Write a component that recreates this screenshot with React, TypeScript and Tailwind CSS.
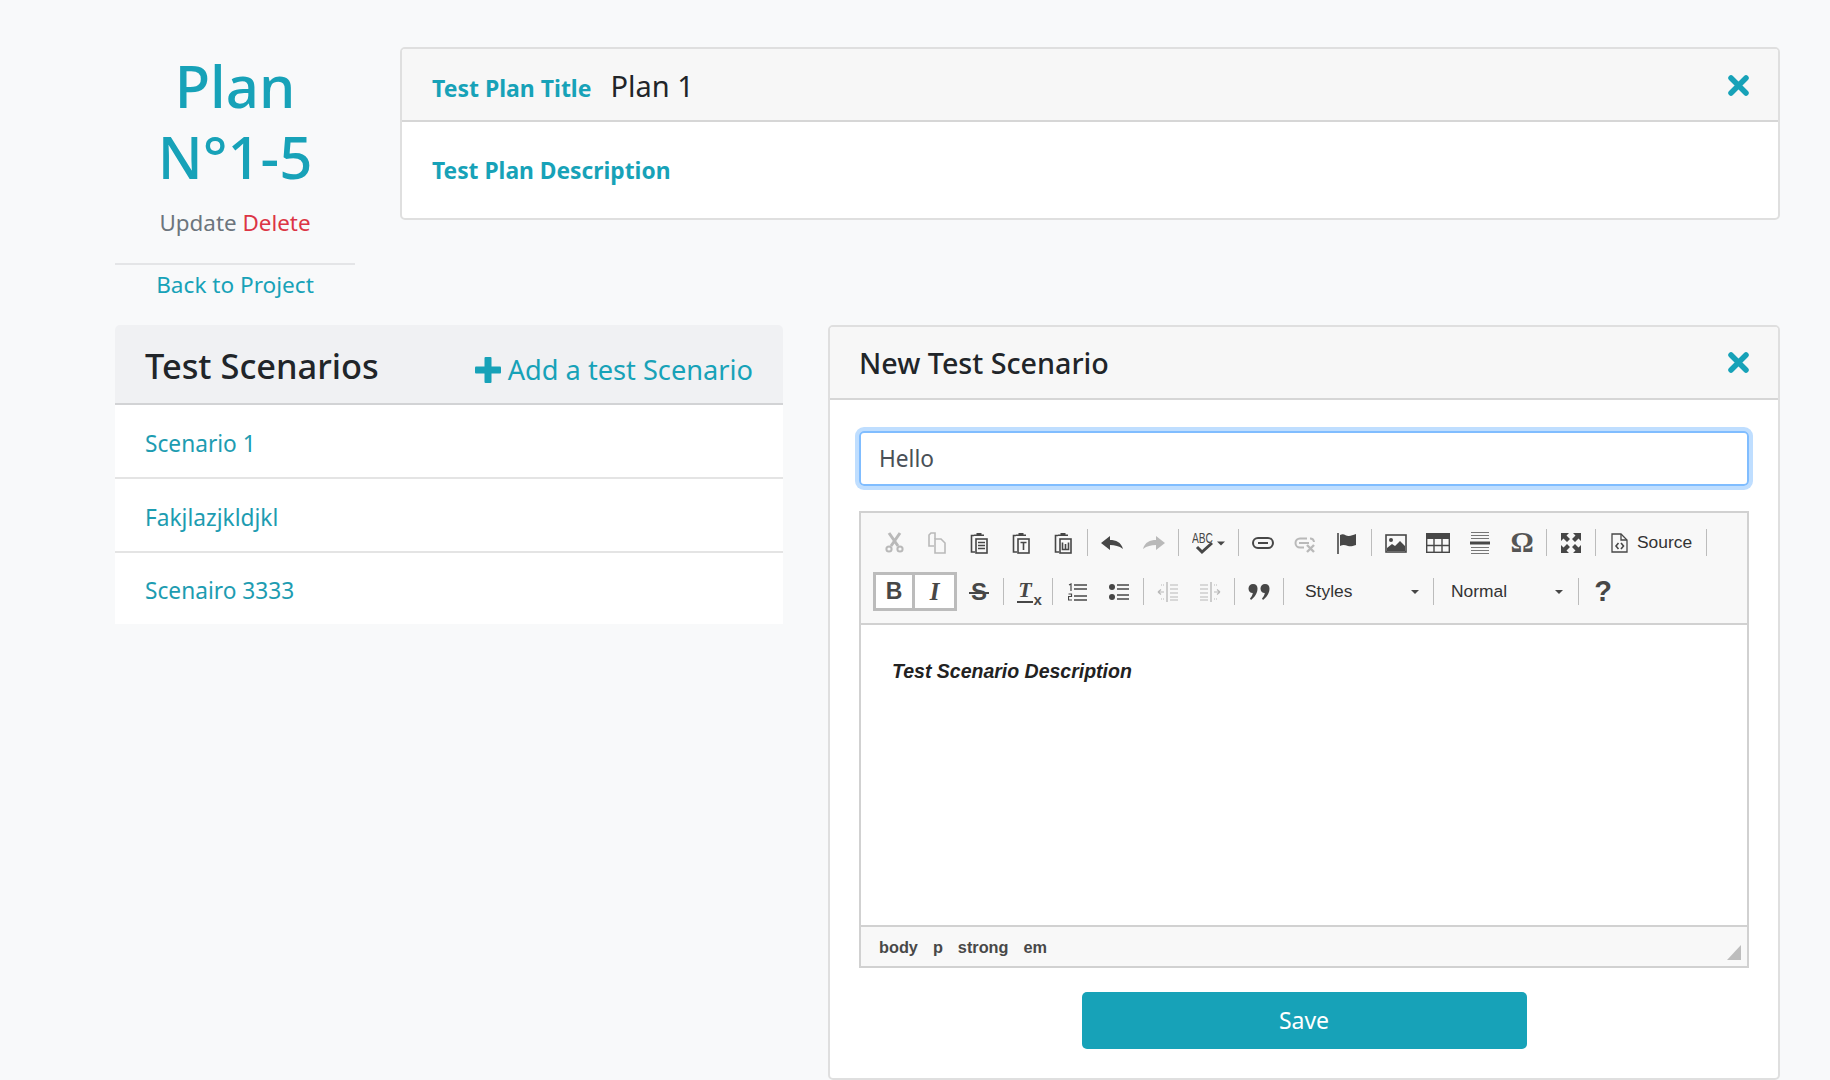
import React from "react";

const sans = "font-['Noto_Sans',sans-serif]";

function Svg({ children, dim }: { children: React.ReactNode; dim?: boolean }) {
  return (
    <svg width="22" height="22" viewBox="0 0 22 22" className={dim ? "opacity-35" : ""} fill="none" stroke="#474747" strokeWidth="1.6">
      {children}
    </svg>
  );
}
function Btn({ children, w = "w-[42px]" }: { children: React.ReactNode; w?: string }) {
  return <div className={`${w} h-[39px] flex items-center justify-center shrink-0`}>{children}</div>;
}
function Sep() {
  return <div className="w-px h-[27px] bg-[#bcbcbc] mx-[3px] shrink-0" />;
}
function Clip({ children }: { children: React.ReactNode }) {
  return (
    <Svg>
      <path d="M6 3.5H3.5V20H7" />
      <path d="M6 4V2.5H8.5V1H13.5V2.5H16V4Z" fill="#474747" stroke="none" />
      <rect x="8" y="7" width="11" height="14" />
      {children}
    </Svg>
  );
}
const Cut = () => (
  <Svg dim>
    <path d="M5 1L14 14M16 1L7 14" strokeWidth="3" />
    <circle cx="5" cy="17" r="2.6" strokeWidth="2" />
    <circle cx="16" cy="17" r="2.6" strokeWidth="2" />
  </Svg>
);
const Copy = () => (
  <Svg dim>
    <path d="M9 7V1H5L3 3V14H8" />
    <path d="M9 7H15L19 11V21H9Z" />
  </Svg>
);
const Paste = () => (
  <Clip>
    <path d="M10 10.5H17M10 13.5H17M10 16.5H17" />
  </Clip>
);
const PasteT = () => (
  <Clip>
    <path d="M10.5 10.5H16.5M13.5 10.5V18" />
  </Clip>
);
const PasteW = () => (
  <Clip>
    <path d="M10.5 10.5V17.5H16.5V10.5M13.5 12V17.5" />
  </Clip>
);
const Undo = ({ dim, flip }: { dim?: boolean; flip?: boolean }) => (
  <Svg dim={dim}>
    <path
      d="M0 11L9 4V8C15 8 20 10 22 17C18 14 14 13 9 13V18Z"
      fill="#474747"
      stroke="none"
      transform={flip ? "matrix(-1 0 0 1 22 0)" : undefined}
    />
  </Svg>
);
const Spell = () => (
  <svg width="33" height="24" viewBox="0 0 33 24" fill="none" stroke="#474747">
    <text x="0" y="12" fontFamily="Liberation Sans" fontSize="15" fill="#474747" stroke="none" textLength="21" lengthAdjust="spacingAndGlyphs">ABC</text>
    <path d="M5 16L10 21L20 12" strokeWidth="3" />
    <path d="M25 10.5H33L29 14.5Z" fill="#474747" stroke="none" />
  </svg>
);
const LinkI = () => (
  <Svg>
    <rect x="1" y="6" width="20" height="10" rx="5" strokeWidth="2" />
    <path d="M6 11H16" strokeWidth="2" />
  </Svg>
);
const Unlink = () => (
  <Svg dim>
    <path d="M13 6.5H6A4.5 4.5 0 0 0 6 15.5H10M5 11H15M16 6.5A4 4 0 0 1 20 10" strokeWidth="2" />
    <path d="M13 13L20 20M20 13L13 20" strokeWidth="2.4" />
  </Svg>
);
const Flag = () => (
  <Svg>
    <path d="M2 1V22" strokeWidth="1.6" />
    <path d="M4 3C8 0.5 10 4.5 13 4C15 3.8 17 3 20 2V13C16 14.5 14 14.5 12 14C9 13 7 12.5 4 14Z" fill="#474747" stroke="none" />
  </Svg>
);
const ImageI = () => (
  <Svg>
    <rect x="1" y="3" width="20" height="17" strokeWidth="1.6" />
    <circle cx="6" cy="8" r="2" fill="#474747" stroke="none" />
    <path d="M2 19V16L7 12L10 14L15 9L20 14V19Z" fill="#474747" stroke="none" />
  </Svg>
);
const Table = () => (
  <svg width="24" height="20" viewBox="0 0 24 20" fill="none" stroke="#474747" strokeWidth="1.4">
    <rect x="0.7" y="0.7" width="22.6" height="18.6" />
    <rect x="0" y="0" width="24" height="6" fill="#474747" stroke="none" />
    <path d="M8 6V19M16 6V19M1 12.5H23" />
  </svg>
);
const Hr = () => (
  <svg width="22" height="24" viewBox="0 0 22 24" fill="none" stroke="#777" strokeWidth="1">
    <path d="M2 1.5H20M2 4.5H20M2 7.5H20M2 16.5H20M2 19.5H20M2 22.5H20" />
    <path d="M1 12H21" stroke="#474747" strokeWidth="3" />
  </svg>
);
const Maxi = () => (
  <Svg>
    <g fill="#474747" stroke="none">
      <path d="M1 1H9L6.5 3.5L10 7L7 10L3.5 6.5L1 9Z" />
      <path d="M21 1V9L18.5 6.5L15 10L12 7L15.5 3.5L13 1Z" />
      <path d="M1 21V13L3.5 15.5L7 12L10 15L6.5 18.5L9 21Z" />
      <path d="M21 21H13L15.5 18.5L12 15L15 12L18.5 15.5L21 13Z" />
    </g>
  </Svg>
);
const SourceI = () => (
  <svg width="17" height="20" viewBox="0 0 17 20" fill="none" stroke="#474747" strokeWidth="1.3">
    <path d="M1 1H10L16 7V19H1Z" />
    <path d="M10 1V7H16" />
    <path d="M7.5 10L5 13L7.5 16M10 10L12.5 13L10 16" strokeWidth="1.6" />
  </svg>
);
const Ol = () => (
  <svg width="19" height="18" viewBox="0 0 19 18" fill="none" stroke="#474747">
    <path d="M6 2H19M6 6H19M6 13H19M6 17H19" strokeWidth="1.6" />
    <path d="M1 2L3 1V8" strokeWidth="1.2" />
    <path d="M0.5 11H3.5V13.5H0.5V17H4" strokeWidth="1.2" />
  </svg>
);
const Ul = () => (
  <svg width="20" height="18" viewBox="0 0 20 18" fill="none" stroke="#474747">
    <circle cx="3" cy="4" r="3" fill="#474747" stroke="none" />
    <circle cx="3" cy="14" r="3" fill="#474747" stroke="none" />
    <path d="M8 2H20M8 6H20M8 12H20M8 16H20" strokeWidth="1.6" />
  </svg>
);
const Indent = ({ flip }: { flip?: boolean }) => (
  <svg width="22" height="20" viewBox="0 0 22 20" fill="none" stroke="#474747" strokeWidth="1.2" className={`opacity-35 ${flip ? "-scale-x-100" : ""}`}>
    <path d="M10 0V20" strokeWidth="1.4" />
    <path d="M13 3H21M13 7H21M13 11H21M13 15H21M13 18H21" />
    <path d="M1 10H7M1 10L4 7.5M1 10L4 12.5" />
    <path d="M4 3H7M4 17H7" strokeDasharray="1 1" />
  </svg>
);
const Quote = () => (
  <svg width="22" height="18" viewBox="0 0 22 18" fill="#474747">
    <path d="M5 1C8 1 9.5 3 9.5 5.5C9.5 10 7 14 3 17L2 15.5C3.5 14 4.5 12 4.8 10C2 10 0.5 8 0.5 5.5C0.5 3 2.5 1 5 1Z" />
    <path d="M17 1C20 1 21.5 3 21.5 5.5C21.5 10 19 14 15 17L14 15.5C15.5 14 16.5 12 16.8 10C14 10 12.5 8 12.5 5.5C12.5 3 14.5 1 17 1Z" />
  </svg>
);
const Caret = () => <span className="w-0 h-0 border-x-[4px] border-x-transparent border-t-[4px] border-t-[#474747]" />;
const Close = () => (
  <svg width="21" height="21" viewBox="0 0 21 21" stroke="#17a2b8" strokeWidth="5.5" strokeLinecap="round" className="shrink-0">
    <path d="M3 3L18 18M18 3L3 18" />
  </svg>
);

const arial = "font-['Liberation_Sans',Arial,sans-serif]";

function Toolbar() {
  return (
    <div className={`bg-[#f8f8f8] border-b-2 border-[#d1d1d1] pt-[10px] pb-[12px] pl-[13px] ${arial} flex flex-col gap-[10px]`}>
      <div className="flex items-center h-[39px]">
        <Btn><Cut /></Btn>
        <Btn><Copy /></Btn>
        <Btn><Paste /></Btn>
        <Btn><PasteT /></Btn>
        <Btn><PasteW /></Btn>
        <Sep />
        <Btn><Undo /></Btn>
        <Btn><Undo dim flip /></Btn>
        <Sep />
        <Btn w="w-[53px]"><Spell /></Btn>
        <Sep />
        <Btn><LinkI /></Btn>
        <Btn><Unlink /></Btn>
        <Btn><Flag /></Btn>
        <Sep />
        <Btn><ImageI /></Btn>
        <Btn><Table /></Btn>
        <Btn><Hr /></Btn>
        <Btn>
          <span className="font-['Liberation_Serif',serif] font-bold text-[29px] leading-none text-[#555]">Ω</span>
        </Btn>
        <Sep />
        <Btn><Maxi /></Btn>
        <Sep />
        <div className="w-[104px] h-[39px] flex items-center pl-[12px] gap-[9px] text-[17.4px] text-[#333]">
          <SourceI />
          <span>Source</span>
        </div>
        <Sep />
      </div>
      <div className="flex items-center h-[39px] -ml-px">
        <div className="flex border-[3px] border-[#bcbcbc] w-[84px] h-[39px] bg-white shrink-0 text-[#474747]">
          <div className="w-[39px] flex items-center justify-center border-r-[3px] border-[#bcbcbc] font-bold text-[23px] leading-none">B</div>
          <div className="flex-1 flex items-center justify-center font-['Liberation_Serif',serif] font-bold italic text-[25px] leading-none">I</div>
        </div>
        <div className="w-px shrink-0" />
        <Btn>
          <span className="relative font-bold text-[24px] leading-none text-[#474747]">
            S
            <span className="absolute -left-[2px] -right-[2px] top-[12px] h-[2px] bg-[#474747]" />
          </span>
        </Btn>
        <Sep />
        <Btn>
          <span className="relative -left-[3px] -top-[1px] font-['Liberation_Serif',serif] font-bold italic text-[22px] leading-none text-[#474747] border-b-2 border-[#474747] px-[1px]">
            T
            <span className={`absolute -right-[9px] -bottom-[6px] not-italic text-[15px] ${arial}`}>x</span>
          </span>
        </Btn>
        <Sep />
        <Btn><Ol /></Btn>
        <Btn><Ul /></Btn>
        <Sep />
        <Btn><Indent /></Btn>
        <Btn><Indent flip /></Btn>
        <Sep />
        <Btn><Quote /></Btn>
        <Sep />
        <div className="w-[143px] h-[39px] flex items-center justify-between pl-[18px] pr-[11px] text-[17.4px] text-[#333]">
          <span>Styles</span>
          <Caret />
        </div>
        <Sep />
        <div className="w-[138px] h-[39px] flex items-center justify-between pl-[14px] pr-[12px] text-[17.4px] text-[#333]">
          <span>Normal</span>
          <Caret />
        </div>
        <Sep />
        <Btn><span className="font-bold text-[29px] leading-none text-[#474747]">?</span></Btn>
      </div>
    </div>
  );
}

export default function App() {
  return (
    <div className={`${sans} bg-[#f8f9fa] h-[1080px] overflow-hidden pl-[115px] pr-[50px] pt-[47px] text-[#212529]`}>
      <div className="flex gap-[45px] h-[278px]">
        <div className="w-[240px] shrink-0 text-center">
          <h1 className="pt-[3px] text-[#17a2b8] text-[58px] leading-[71px] font-medium">
            Plan
            <br />
            N°1-5
          </h1>
          <div className="mt-[17px] text-[22.4px] leading-[28px] text-[#6c757d]">
            Update <span className="text-[#dc3545]">Delete</span>
          </div>
          <div className="mt-[26px] border-t-2 border-[#e4e5e7]" />
          <div className="mt-[6px] text-[22.6px] leading-[28px] text-[#17a2b8]">Back to Project</div>
        </div>
        <div className="flex-1 h-[173px] bg-white border-2 border-[#dfdfdf] rounded-[5px] overflow-hidden">
          <div className="h-[73px] bg-[#f7f7f7] border-b-2 border-[#d6d6d6] pl-[30px] pr-[29px] pt-[2px] flex items-center justify-between">
            <div className="flex items-baseline gap-[19px]">
              <span className="text-[#17a2b8] font-bold text-[23px]">Test Plan Title</span>
              <span className="text-[29px]">Plan 1</span>
            </div>
            <Close />
          </div>
          <div className="pl-[30px] pt-[33px] text-[#17a2b8] font-bold text-[22.8px] leading-[32px]">Test Plan Description</div>
        </div>
      </div>
      <div className="flex gap-[45px]">
        <div className="w-[668px] shrink-0">
          <div className="h-[80px] bg-[#f0f1f3] rounded-t-[5px] border-b-2 border-[#d2d3d5] pl-[30px] pr-[30px] flex items-center justify-between">
            <span className="text-[34.4px] font-medium pt-[4px]">Test Scenarios</span>
            <span className="flex items-center gap-[7px] text-[#17a2b8] text-[27.2px] pt-[12px]">
              <svg width="26" height="26" viewBox="0 0 26 26" fill="#17a2b8" className="shrink-0">
                <rect x="9.5" y="0" width="7" height="26" rx="1" />
                <rect x="0" y="9.5" width="26" height="7" rx="1" />
              </svg>
              Add a test Scenario
            </span>
          </div>
          {["Scenario 1", "Fakjlazjkldjkl", "Scenairo 3333"].map((t, i) => (
            <div
              key={t}
              className={`bg-white pl-[30px] pt-[6px] flex items-center text-[22.7px] text-[#1d9cb1] ${i < 2 ? "h-[74px] border-b-2 border-[#e4e4e4]" : "h-[71px]"}`}
            >
              {t}
            </div>
          ))}
        </div>
        <div className="flex-1 h-[755px] bg-white border-2 border-[#dfdfdf] rounded-[5px] overflow-hidden">
          <div className="h-[73px] bg-[#f7f7f7] border-b-2 border-[#d6d6d6] pl-[29px] pr-[29px] flex items-center justify-between">
            <span className="text-[28.7px] font-medium">New Test Scenario</span>
            <Close />
          </div>
          <div className="px-[29px] pt-[31px]">
            <div className="h-[55px] border-2 border-[#80bdff] rounded-[5px] ring-4 ring-[#bfdeff] flex items-center pl-[18px] pt-[2px] text-[22.7px] text-[#495057]">
              Hello
            </div>
            <div className="mt-[25px] border-2 border-[#d1d1d1]">
              <Toolbar />
              <div className={`h-[300px] bg-white pl-[31px] pt-[34px] ${arial} font-bold italic text-[19.5px] leading-[24px] text-[#222]`}>
                Test Scenario Description
              </div>
              <div className={`relative h-[41px] bg-[#f8f8f8] border-t-2 border-[#d1d1d1] pl-[18px] pt-[2px] flex items-center gap-[15px] ${arial} font-bold text-[16.3px] text-[#484848]`}>
                <span>body</span>
                <span>p</span>
                <span>strong</span>
                <span>em</span>
                <span className="absolute right-[6px] bottom-[6px] w-0 h-0 border-l-[14px] border-l-transparent border-b-[15px] border-b-[#bdbdbd]" />
              </div>
            </div>
            <div className="flex justify-center mt-[24px]">
              <div className="w-[445px] h-[57px] rounded-[5px] bg-[#17a2b8] text-white text-[23px] flex items-center justify-center">
                Save
              </div>
            </div>
          </div>
        </div>
      </div>
    </div>
  );
}
